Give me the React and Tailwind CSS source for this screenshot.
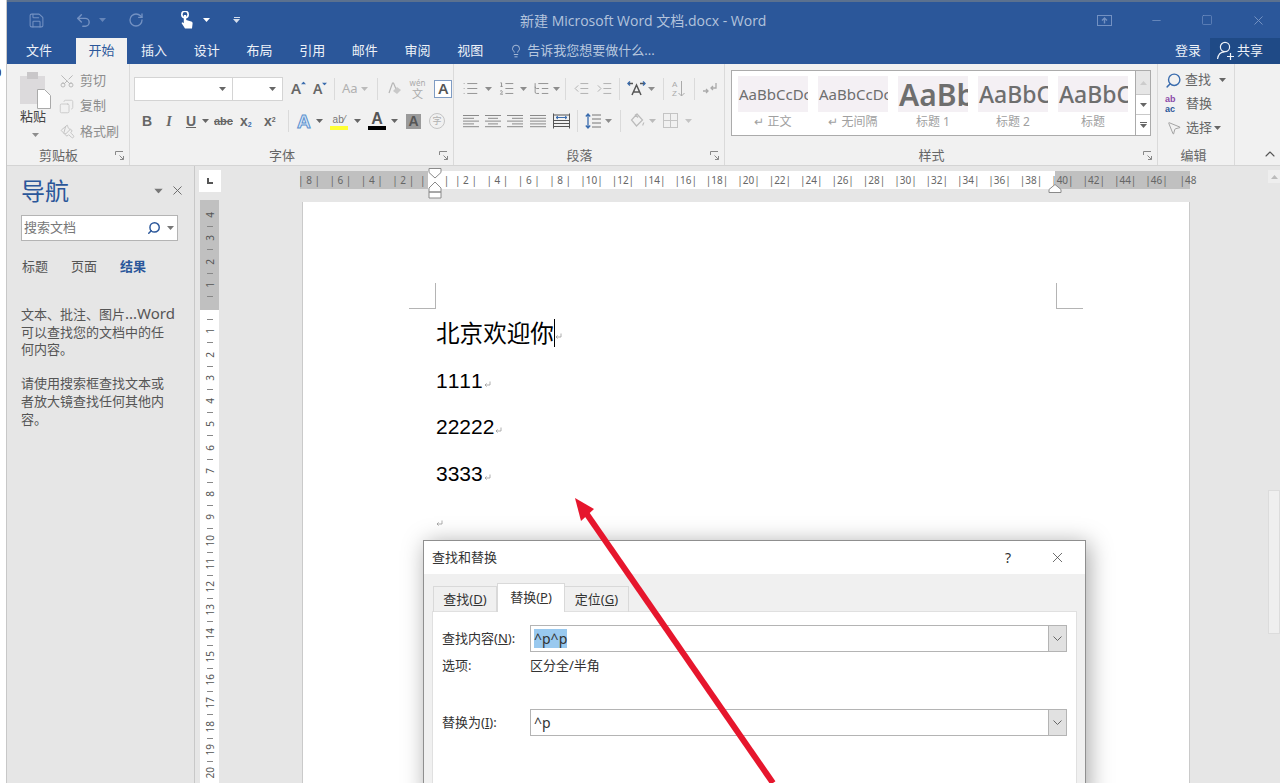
import { ChevronUp, Copy, IndentDecrease, IndentIncrease, Lightbulb, List, ListOrdered, ListTree, Minus, MousePointer2, Paintbrush, RotateCcw, Save, Scissors, Search, Square, Undo2, X } from "lucide-react";

const HRULER = [8, 6, 4, 2, 0, 2, 4, 6, 8, 10, 12, 14, 16, 18, 20, 22, 24, 26, 28, 30, 32, 34, 36, 38, 40, 42, 44, 46, 48];
const VRULER_TOP = [4, 3, 2, 1];
const VRULER = [1, 2, 3, 4, 5, 6, 7, 8, 9, 10, 11, 12, 13, 14, 15, 16, 17, 18, 19, 20];
const TABS = ["插入", "设计", "布局", "引用", "邮件", "审阅", "视图"];

function Down({ className = "text-[#666]" }) {
  return (
    <svg width="7" height="4" viewBox="0 0 7 4" className={`shrink-0 ${className}`}>
      <path d="M0 0h7L3.5 4z" fill="currentColor" />
    </svg>
  );
}

function Launcher() {
  return (
    <svg width="9" height="9" viewBox="0 0 9 9" className="shrink-0 text-[#888]" fill="none" stroke="currentColor">
      <path d="M.5 4V.5H8M8.5 8.5 4.5 4.5M8.5 5v3.5H5" />
    </svg>
  );
}

function Sep({ className = "" }) {
  return <span className={`w-px h-[22px] bg-[#dadada] shrink-0 ${className}`} />;
}

function Lines({ rows, className = "" }) {
  return (
    <svg width="16" height="14" viewBox="0 0 16 14" className={`shrink-0 text-[#8a8a8a] ${className}`} stroke="currentColor" fill="none">
      {rows.map((r, i) => (
        <path key={i} d={`M${r[0]} ${1.5 + i * 2.8}H${r[1]}`} />
      ))}
    </svg>
  );
}

function Group({ label, width, launcher = true, children }) {
  return (
    <div className={`flex flex-col shrink-0 h-full border-r border-[#dadada] ${width}`}>
      <div className="flex-1 min-h-0">{children}</div>
      <div className="h-[21px] flex items-center pr-[5px] pt-[2px] text-[13px] leading-none text-[#666]">
        <span className={`flex-1 text-center ${launcher ? "mr-[5px]" : ""}`}>{label}</span>
        {launcher && <Launcher />}
      </div>
    </div>
  );
}

function StyleItem({ sample, label, sampleClass }) {
  return (
    <div className="w-[70px] shrink-0 flex flex-col">
      <div className={`h-[36px] bg-[#f4f0f4] overflow-hidden whitespace-nowrap flex items-center justify-start pl-[1px] text-[#6e6e6e] ${sampleClass}`}>
        {sample}
      </div>
      <div className="text-[12px] leading-[18px] mt-[1px] text-center text-[#a0a0a0]">{label}</div>
    </div>
  );
}

function Return({ className = "" }) {
  return (
    <svg width="7" height="7" viewBox="0 0 7 7" className={`inline-block text-[#999] ${className}`} fill="none" stroke="currentColor" strokeWidth="0.8">
      <path d="M6 .5V4H1M2.6 2.4 1 4l1.6 1.6" />
    </svg>
  );
}

function Combo({ value, selected = false }) {
  return (
    <div className="w-[537px] h-[27px] border border-[#b4b4b4] bg-white flex items-center">
      <span className="flex-1 pl-[3px] text-[14px] text-[#333]">
        <span className={selected ? "bg-[#99c9ef]" : ""}>{value}</span>
      </span>
      <div className="w-[18px] h-full bg-[#e1e1e1] border-l border-[#b4b4b4] flex items-center justify-center">
        <svg width="9" height="5" viewBox="0 0 9 5" fill="none" stroke="#666"><path d="m.5.5 4 4 4-4" /></svg>
      </div>
    </div>
  );
}

function TitleBar() {
  return (
    <div className="h-[38px] border-t-2 border-[#5b718f] flex items-center relative text-[#7391c2]">
      <Save size={17} strokeWidth={1.5} className="ml-[21px]" />
      <Undo2 size={17} strokeWidth={2} className="ml-[30px]" />
      <Down className="ml-[7px] text-[#6585b9]" />
      <RotateCcw size={16} strokeWidth={2} className="ml-[22px] -scale-x-100" />
      <svg width="15" height="19" viewBox="0 0 15 19" className="ml-[35px] text-white" fill="currentColor">
        <circle cx="6" cy="3.5" r="3.2" fill="none" stroke="currentColor" strokeWidth="1.6" />
        <path d="M4.8 4h2.4v5l5 1.5c1 .4 1.5 1 1.4 2L13 17.5H6L2.5 12l1-.8 1.3 1z" />
      </svg>
      <Down className="ml-[9px] text-white" />
      <span className="ml-[23px] flex flex-col items-center gap-[1px] text-[#d5deec]">
        <span className="w-[6px] h-px bg-current" />
        <Down className="text-[#d5deec]" />
      </span>
      <span className="absolute left-[513px] text-[14px] text-[#b3c3dc] font-['Open_Sans','Noto_Sans_CJK_SC',sans-serif]">
        新建 Microsoft Word 文档.docx - Word
      </span>
      <div className="ml-auto flex items-center">
        <svg width="15" height="11" viewBox="0 0 15 11" fill="none" stroke="currentColor">
          <rect x=".5" y=".5" width="14" height="10" />
          <path d="M7.5 8.5v-5M5 5.5l2.5-2.5L10 5.5" strokeWidth="1.4" />
        </svg>
        <Minus size={13} strokeWidth={1.5} className="ml-[38px]" />
        <Square size={12} strokeWidth={1.3} className="ml-[38px]" />
        <X size={15} strokeWidth={1.6} className="ml-[38px] mr-[14px]" />
      </div>
    </div>
  );
}

function TabRow() {
  return (
    <div className="h-[26px] flex items-stretch text-[13px] text-[#eef2f8]">
      <span className="ml-[19px] self-center">文件</span>
      <span className="ml-[24px] mr-[14px] w-[51px] bg-[#f1f1f1] text-[#2b579a] flex items-center justify-center">开始</span>
      <div className="flex items-center gap-[26.7px]">
        {TABS.map((t) => (
          <span key={t}>{t}</span>
        ))}
      </div>
      <Lightbulb size={14} strokeWidth={1.4} className="ml-[26px] self-center text-[#c3d0e4]" />
      <span className="ml-[4px] self-center text-[#b8c7de]">告诉我您想要做什么...</span>
      <span className="ml-auto self-center">登录</span>
      <div className="ml-[9px] w-[70px] bg-[#1f4a86] flex items-center">
        <svg width="20" height="20" viewBox="0 0 20 20" className="ml-[6px]" fill="none" stroke="currentColor" strokeWidth="1.2">
          <circle cx="9" cy="6" r="4.6" />
          <path d="M1.5 18c.5-4 3-7 7-7.2M14.5 12v7M11 15.5h7" />
        </svg>
        <span className="ml-[1px]">共享</span>
      </div>
    </div>
  );
}

function Ribbon() {
  return (
    <div className="h-[102px] bg-[#f1f1f1] border-b border-[#d4d4d4] flex text-[#8d8d8d] text-[13px]">
      <Group label="剪贴板" width="w-[123px]">
        <div className="flex h-full">
          <div className="w-[52px] pl-[13px] pt-[8px] flex flex-col">
            <svg width="31" height="37" viewBox="0 0 31 37">
              <rect y="4" width="25" height="28" fill="#dcdadc" />
              <rect x="7" y="0" width="11" height="7" fill="#c9c7c9" />
              <path d="M17.5 17.5h7l6 6v13h-13z" fill="#fff" stroke="#aaa" />
            </svg>
            <span className="-mt-[2px] text-[#444] leading-[18px]">粘贴</span>
            <Down className="mt-[8px] ml-[12px]" />
          </div>
          <div className="pt-[7px] flex flex-col gap-[6.5px]">
            <div className="flex items-center h-[19px]"><Scissors size={16} strokeWidth={1.4} className="-rotate-90 text-[#b5b5b5]" /><span className="ml-[5px]">剪切</span></div>
            <div className="flex items-center h-[19px]"><Copy size={15} strokeWidth={1.2} className="text-[#c0c0c0] -scale-x-100" /><span className="ml-[6px]">复制</span></div>
            <div className="flex items-center h-[19px]"><Paintbrush size={15} strokeWidth={1.6} className="ml-[1px] rotate-90 text-[#c4c4c4]" /><span className="ml-[5px]">格式刷</span></div>
          </div>
        </div>
      </Group>
      <Group label="字体" width="w-[324px]">
        <div className="pl-[4px] pt-[13px] flex items-center h-[36px]">
          <div className="w-[99px] h-[24px] bg-white border border-[#d4d4d4] flex items-center justify-end pr-[6px]"><Down /></div>
          <div className="w-[50px] h-[24px] bg-white border border-l-0 border-[#d4d4d4] flex items-center justify-end pr-[6px]"><Down /></div>
          <span className="ml-[8px] w-[16px] text-[15px] leading-none font-semibold text-[#666] flex items-start">A<Down className="rotate-180 scale-75 text-[#3a6cae] -ml-[1px]" /></span>
          <span className="ml-[6px] w-[16px] text-[14px] leading-none font-semibold text-[#666] flex items-start">A<Down className="scale-75 text-[#3a6cae] -ml-[1px]" /></span>
          <Sep className="ml-[5px]" />
          <span className="ml-[7px] text-[13px] text-[#b0b0b0]">Aa</span>
          <Down className="ml-[3px] text-[#bbb]" />
          <Sep className="ml-[9px]" />
          <svg width="14" height="14" viewBox="0 0 14 14" className="ml-[9px]">
            <path d="M2 11 5.5 1h1L9 7" fill="none" stroke="#b5b5b5" strokeWidth="1.2" />
            <path d="m6 9 4-4 4 3-4 4z" fill="#c9c9c9" />
          </svg>
          <ruby className="ml-[9px] text-[11px] leading-none text-[#aaa]">文<rt className="text-[8px] leading-none">wén</rt></ruby>
          <span className="ml-[9px] w-[18px] h-[18px] border border-[#7f9cc4] bg-white flex items-center justify-center text-[15px] leading-none font-semibold text-[#555]">A</span>
        </div>
        <div className="pl-[10px] pt-[8px] flex items-center h-[34px] text-[#666] font-['Liberation_Sans',sans-serif]">
          <span className="w-[14px] text-[14px] font-bold text-center">B</span>
          <span className="ml-[8px] w-[14px] text-[14px] font-bold italic text-center font-['Liberation_Serif',serif]">I</span>
          <span className="ml-[8px] w-[14px] text-[14px] font-bold text-center underline">U</span>
          <Down className="ml-[4px]" />
          <span className="ml-[5px] w-[20px] text-[11px] font-bold line-through">abc</span>
          <span className="ml-[6px] w-[16px] text-[14px] font-bold">x<sub className="text-[7px] text-[#3a6cae]">2</sub></span>
          <span className="ml-[8px] w-[16px] text-[14px] font-bold">x<sup className="text-[7px]">2</sup></span>
          <Sep className="ml-[8px]" />
          <span className="ml-[8px] w-[16px] text-[19px] leading-none font-bold text-[#d9e7f6] [-webkit-text-stroke:1px_#5b91cf]">A</span>
          <Down className="ml-[3px]" />
          <span className="ml-[6px] w-[20px] flex flex-col items-center">
            <span className="text-[10px] leading-[13px] text-[#777]">ab⁄</span>
            <span className="w-[18px] h-[4px] bg-[#ffff33]" />
          </span>
          <Down className="ml-[5px]" />
          <span className="ml-[7px] w-[18px] flex flex-col items-center">
            <span className="text-[16px] leading-[13px] font-bold text-[#555]">A</span>
            <span className="w-[18px] h-[4px] mt-[1px] bg-black" />
          </span>
          <Down className="ml-[5px]" />
          <span className="ml-[8px] w-[15px] h-[15px] bg-[#9a9a9a] flex items-center justify-center text-[14px] font-bold text-[#555]">A</span>
          <span className="ml-[8px] w-[16px] h-[16px] rounded-full border border-[#c4c4c4] flex items-center justify-center text-[9px] text-[#b0b0b0] font-['Noto_Sans_CJK_SC',sans-serif]">字</span>
        </div>
      </Group>
      <Group label="段落" width="w-[271px]">
        <div className="pl-[8px] pt-[13px] flex items-center h-[36px]">
          <List size={17} strokeWidth={1.3} />
          <Down className="ml-[6px]" />
          <ListOrdered size={17} strokeWidth={1.3} className="ml-[6px]" />
          <Down className="ml-[5px]" />
          <ListTree size={17} strokeWidth={1.3} className="ml-[6px]" />
          <Down className="ml-[3px]" />
          <Sep className="ml-[5px]" />
          <IndentDecrease size={17} strokeWidth={1.2} className="ml-[7px] text-[#a8a8a8]" />
          <IndentIncrease size={17} strokeWidth={1.2} className="ml-[6px] text-[#a8a8a8]" />
          <Sep className="ml-[6px]" />
          <svg width="19" height="15" viewBox="0 0 19 15" className="ml-[7px] text-[#555]" fill="none" stroke="currentColor" strokeWidth="1.5">
            <path d="M5 14 9.5 4l4.5 10M6.5 11h6M1 2.5h5M13 2.5h5" />
            <path d="M3 .5 1 2.5l2 2M16 .5l2 2-2 2" stroke="#3a6cae" />
          </svg>
          <Down className="ml-[2px]" />
          <Sep className="ml-[8px]" />
          <span className="ml-[8px] w-[17px] flex items-center text-[#aaa]">
            <span className="text-[8px] leading-[9px] font-['Liberation_Sans',sans-serif]">A<br />Z</span>
            <svg width="7" height="16" viewBox="0 0 7 16" className="ml-[1px]" fill="none" stroke="currentColor"><path d="M3.5 0v15M.5 12l3 3 3-3" /></svg>
          </span>
          <Sep className="ml-[5px]" />
          <svg width="14" height="11" viewBox="0 0 14 11" className="ml-[8px] text-[#aaa]" fill="none" stroke="currentColor" strokeWidth="1.3">
            <path d="M13 0v5H8M10 3 8 5l2 2M0 8h5M3 6l2 2-2 2" />
          </svg>
        </div>
        <div className="pl-[9px] pt-[7px] flex items-center h-[34px]">
          <Lines rows={[[0, 16], [0, 11], [0, 16], [0, 11], [0, 16]]} />
          <Lines className="ml-[6px]" rows={[[0, 16], [3, 13], [0, 16], [3, 13], [0, 16]]} />
          <Lines className="ml-[6px]" rows={[[0, 16], [5, 16], [0, 16], [5, 16], [0, 16]]} />
          <Lines className="ml-[7px]" rows={[[0, 16], [0, 16], [0, 16], [0, 16], [0, 16]]} />
          <svg width="17" height="16" viewBox="0 0 17 16" className="ml-[7px] text-[#555]" fill="none" stroke="currentColor">
            <path d="M.5 2H16.5M.5 7.5h16M.5 10.5h16M.5 13.5h16M.5.5v15M16.5.5v15" />
            <path d="M3 4.5h11M5 3 3 4.5 5 6M12 3l2 1.5L12 6" stroke="#3a6cae" />
          </svg>
          <Sep className="ml-[7px]" />
          <svg width="16" height="16" viewBox="0 0 16 16" className="ml-[7px] text-[#777]" fill="none" stroke="currentColor">
            <path d="M7 2h9M7 6h9M7 10h9M7 14h9" />
            <path d="M3 1v14M.8 3.5 3 1l2.2 2.5M.8 12.5 3 15l2.2-2.5" stroke="#3a6cae" strokeWidth="1.3" />
          </svg>
          <Down className="ml-[4px]" />
          <Sep className="ml-[8px]" />
          <svg width="16" height="15" viewBox="0 0 16 15" className="ml-[9px] text-[#bbb]" fill="none" stroke="currentColor" strokeWidth="1.2">
            <path d="M7 1 1.5 7l5 6 6-6zM5 1.5l3 3M14 9.5c-1 1.5-1.5 2-1 3" />
          </svg>
          <Down className="ml-[3px] text-[#bbb]" />
          <svg width="15" height="15" viewBox="0 0 15 15" className="ml-[7px] text-[#c4c4c4]" fill="none" stroke="currentColor">
            <rect x=".5" y=".5" width="14" height="14" />
            <path d="M.5 7.5h14M7.5.5v14" />
          </svg>
          <Down className="ml-[7px] text-[#c4c4c4]" />
        </div>
      </Group>
      <Group label="样式" width="w-[433px]">
        <div className="ml-[6px] mt-[6px] w-[420px] h-[66px] border border-[#ababab] bg-white flex">
          <div className="flex-1 pl-[6px] pt-[5px] flex gap-[10px]">
            <StyleItem sample="AaBbCcDc" label="↵ 正文" sampleClass="text-[15px]" />
            <StyleItem sample="AaBbCcDc" label="↵ 无间隔" sampleClass="text-[15px]" />
            <StyleItem sample="AaBb" label="标题 1" sampleClass="text-[30px] font-semibold" />
            <StyleItem sample="AaBbC" label="标题 2" sampleClass="text-[23px] font-medium" />
            <StyleItem sample="AaBbC" label="标题" sampleClass="text-[23px] font-medium" />
          </div>
          <div className="w-[15px] border-l border-[#ababab] flex flex-col">
            <div className="h-[23px] bg-[#e6e6e6] flex items-center justify-center"><Down className="rotate-180 text-[#ccc]" /></div>
            <div className="h-[21px] border-y border-[#c9c9c9] flex items-center justify-center"><Down /></div>
            <div className="flex-1 flex flex-col items-center justify-center gap-[1px]"><span className="w-[7px] h-px bg-[#666]" /><Down /></div>
          </div>
        </div>
      </Group>
      <Group label="编辑" width="w-[77px]" launcher={false}>
        <div className="pl-[7px] pt-[4px] text-[#666] flex flex-col">
          <div className="flex items-center h-[24px]">
            <Search size={17} strokeWidth={2} className="-scale-x-100 text-[#3a6cae]" />
            <span className="ml-[3px]">查找</span>
            <Down className="ml-[8px]" />
          </div>
          <div className="flex items-center h-[24px]">
            <span className="w-[18px] text-[9px] leading-[10px] text-[#2b579a] font-semibold font-['Liberation_Sans',sans-serif]"><span className="text-[#8c4aa8]">ab</span><br />ac</span>
            <span className="ml-[3px]">替换</span>
          </div>
          <div className="flex items-center h-[24px]">
            <MousePointer2 size={16} strokeWidth={1.1} className="ml-[1px] text-[#888]" />
            <span className="ml-[4px]">选择</span>
            <Down className="ml-[2px]" />
          </div>
        </div>
      </Group>
      <div className="flex-1 flex items-end justify-end pr-[2px] pb-[3px]">
        <ChevronUp size={16} strokeWidth={1.6} className="text-[#555]" />
      </div>
    </div>
  );
}

function NavPane() {
  return (
    <div className="w-[188px] shrink-0 border-r border-[#c8c8c8] bg-[#e6e6e6] pl-[14px] text-[13px] text-[#555]">
      <div className="h-[49px] flex items-center pr-[9px]">
        <span className="text-[24px] text-[#2b579a]">导航</span>
        <Down className="ml-auto text-[#777] scale-125" />
        <X size={15} strokeWidth={1.5} className="ml-[8px] text-[#666]" />
      </div>
      <div className="w-[157px] h-[26px] border border-[#b4b4b4] bg-white flex items-center pl-[2px] text-[#777]">
        <span>搜索文档</span>
        <Search size={14} strokeWidth={2.5} className="ml-auto -scale-x-100 text-[#2b579a]" />
        <Down className="ml-[6px] mr-[3px]" />
      </div>
      <div className="mt-[16px] h-[20px] pl-[1px] flex items-center gap-[23px]">
        <span>标题</span>
        <span>页面</span>
        <span className="font-semibold text-[#2b579a]">结果</span>
      </div>
      <div className="mt-[29px] leading-[17.6px]">
        <p>文本、批注、图片<span className="text-[15px] leading-none">...Word</span></p>
        <p>可以查找您的文档中的任</p>
        <p>何内容。</p>
      </div>
      <div className="mt-[15px] leading-[18px]">
        <p>请使用搜索框查找文本或</p>
        <p>者放大镜查找任何其他内</p>
        <p>容。</p>
      </div>
    </div>
  );
}

function Tick() {
  return <span className="h-[11.63px] shrink-0 flex items-center"><span className="w-[6px] h-px bg-[#888]" /></span>;
}

function VSlot({ n }) {
  return (
    <>
      <span className="h-[11.63px] shrink-0 flex items-center justify-center text-[10px] leading-none -rotate-90 whitespace-nowrap">{n}</span>
      <Tick />
    </>
  );
}

function VerticalRuler() {
  return (
    <div className="mt-[8px] ml-[5px] w-[19px] flex-1 min-h-0 overflow-hidden flex flex-col items-center text-[#555] pt-[9.2px] bg-[linear-gradient(to_bottom,#c0c0c0_110px,#fff_110px)]">
      {VRULER_TOP.map((n) => <VSlot key={`t${n}`} n={n} />)}
      <span className="h-[11.63px] shrink-0" />
      <Tick />
      {VRULER.map((n) => <VSlot key={n} n={n} />)}
    </div>
  );
}

function HorizontalRuler() {
  return (
    <div className="relative mt-[5px] -ml-[2px] w-[890px] h-[18px] flex items-center text-[10px] text-[#666] bg-[linear-gradient(to_right,#c0c0c0_128px,#fff_128px,#fff_755px,#c0c0c0_755px)]">
      <div className="-ml-[6.7px] flex whitespace-nowrap">
        {HRULER.map((n, i) => (
          <span key={i} className="w-[31.4px] shrink-0 text-center">
            {n === 0 ? "|\u00a0\u00a0\u00a0\u00a0\u00a0\u00a0\u00a0|" : n === 48 ? "|48" : n >= 10 ? `|${n}|` : `| ${n} |`}
          </span>
        ))}
      </div>
      <svg width="14" height="31" viewBox="0 0 14 31" className="absolute left-[128px] -top-[3px]" fill="#fff" stroke="#8a8a8a">
        <path d="M1 .5h12v4L7 10 1 4.5zM7 14l6 6v4H1v-4zM1 24h12v6H1z" />
      </svg>
      <svg width="14" height="9" viewBox="0 0 14 9" className="absolute left-[748px] top-[13px]" fill="#fff" stroke="#8a8a8a">
        <path d="m7 .5 6 5v3H1v-3z" />
      </svg>
    </div>
  );
}

function Page() {
  return (
    <div className="mt-[13px] w-[888px] h-[600px] bg-white border-l border-r border-[#cacaca] pt-[81px]">
      <div className="flex justify-between pl-[106px] pr-[106px]">
        <div className="w-[27px] h-[26px] border-r border-b border-[#b4b4b4]" />
        <div className="w-[27px] h-[26px] border-l border-b border-[#b4b4b4]" />
      </div>
      <div className="pl-[133px] text-black">
        <div className="h-[48px] flex items-center text-[23.6px] font-['Noto_Sans_CJK_SC',sans-serif]">
          北京欢迎你
          <span className="w-px h-[28px] bg-black" />
          <Return className="mt-[6px]" />
        </div>
        {["1111", "22222", "3333"].map((t) => (
          <div key={t} className="h-[46.5px] flex items-center text-[21px] [font-kerning:none] font-['Liberation_Sans',sans-serif]">
            {t}
            <Return className="mt-[8px] ml-[1px]" />
          </div>
        ))}
        <div className="h-[46px] flex items-center pt-[8px]"><Return /></div>
      </div>
    </div>
  );
}

function Dialog() {
  return (
    <div className="absolute left-[423px] top-[540px] w-[663px] h-[260px] bg-[#f0f0f0] border-t border-x border-[#8f8f8f] shadow-[3px_3px_22px_rgba(0,0,0,0.35)] text-[13px] text-[#333]">
      <div className="h-[33px] bg-white flex items-center pl-[8px]">
        <span>查找和替换</span>
        <span className="ml-auto text-[14px]">?</span>
        <X size={17} strokeWidth={1} className="ml-[38px] mr-[19px]" />
      </div>
      <div className="px-[8px] pt-[9px]">
        <div className="flex items-end h-[29px]">
          <span className="ml-[1px] w-[64px] h-[26px] border border-b-0 border-[#d9d9d9] flex items-center justify-center">查找(<u>D</u>)</span>
          <span className="relative w-[68px] h-[29px] bg-white border border-b-0 border-[#d9d9d9] flex items-center justify-center">替换(<u>P</u>)</span>
          <span className="w-[64px] h-[26px] border border-b-0 border-l-0 border-[#d9d9d9] flex items-center justify-center">定位(<u>G</u>)</span>
        </div>
        <div className="-mt-[1px] w-[645px] h-[200px] bg-white border border-[#e0e0e0] pl-[9px] pt-[13px]">
          <div className="flex items-center">
            <span className="w-[88px]">查找内容(<u>N</u>):</span>
            <Combo value="^p^p" selected />
          </div>
          <div className="flex items-center mt-[5px] h-[18px]">
            <span className="w-[88px]">选项:</span>
            <span>区分全/半角</span>
          </div>
          <div className="flex items-center mt-[34px]">
            <span className="w-[88px]">替换为(<u>I</u>):</span>
            <Combo value="^p" />
          </div>
        </div>
      </div>
    </div>
  );
}

export default function App() {
  return (
    <div className="relative w-[1280px] h-[783px] overflow-hidden flex bg-[#e6e6e6] font-['Noto_Sans','Noto_Sans_CJK_SC',sans-serif]">
      <div className="w-[7px] shrink-0 bg-white border-r border-[#c8c8c8] pt-[66px] overflow-hidden text-[13px] leading-none text-[#222]">
        <span className="-ml-[6px]">0</span>
      </div>
      <div className="flex-1 min-w-0 flex flex-col">
        <div className="bg-[#2b579a]">
          <TitleBar />
          <TabRow />
        </div>
        <Ribbon />
        <div className="flex-1 min-h-0 flex">
          <NavPane />
          <div className="w-[107px] shrink-0 flex flex-col pt-[4px] pl-[4px]">
            <div className="w-[22px] h-[22px] bg-white flex items-center justify-center">
              <span className="w-[6px] h-[6px] border-l-2 border-b-2 border-[#555]" />
            </div>
            <div className="-ml-[4px] flex-1 min-h-0 flex flex-col"><VerticalRuler /></div>
          </div>
          <div className="w-[888px] shrink-0">
            <HorizontalRuler />
            <Page />
          </div>
          <div className="flex-1" />
          <div className="w-[12px] shrink-0 pt-[4px]">
            <div className="h-[13px] bg-[#eeeeee] flex items-center justify-center"><Down className="rotate-180 text-[#bbb]" /></div>
            <div className="mt-[307px] h-[144px] bg-[#efefef] border border-[#dcdcdc]" />
          </div>
        </div>
      </div>
      <Dialog />
      <svg width="1280" height="783" viewBox="0 0 1280 783" className="absolute inset-0 pointer-events-none">
        <path d="M584 510 773 783" stroke="#e6162d" strokeWidth="6" fill="none" />
        <path d="m575 498 19 11-13 12z" fill="#e6162d" />
      </svg>
    </div>
  );
}
